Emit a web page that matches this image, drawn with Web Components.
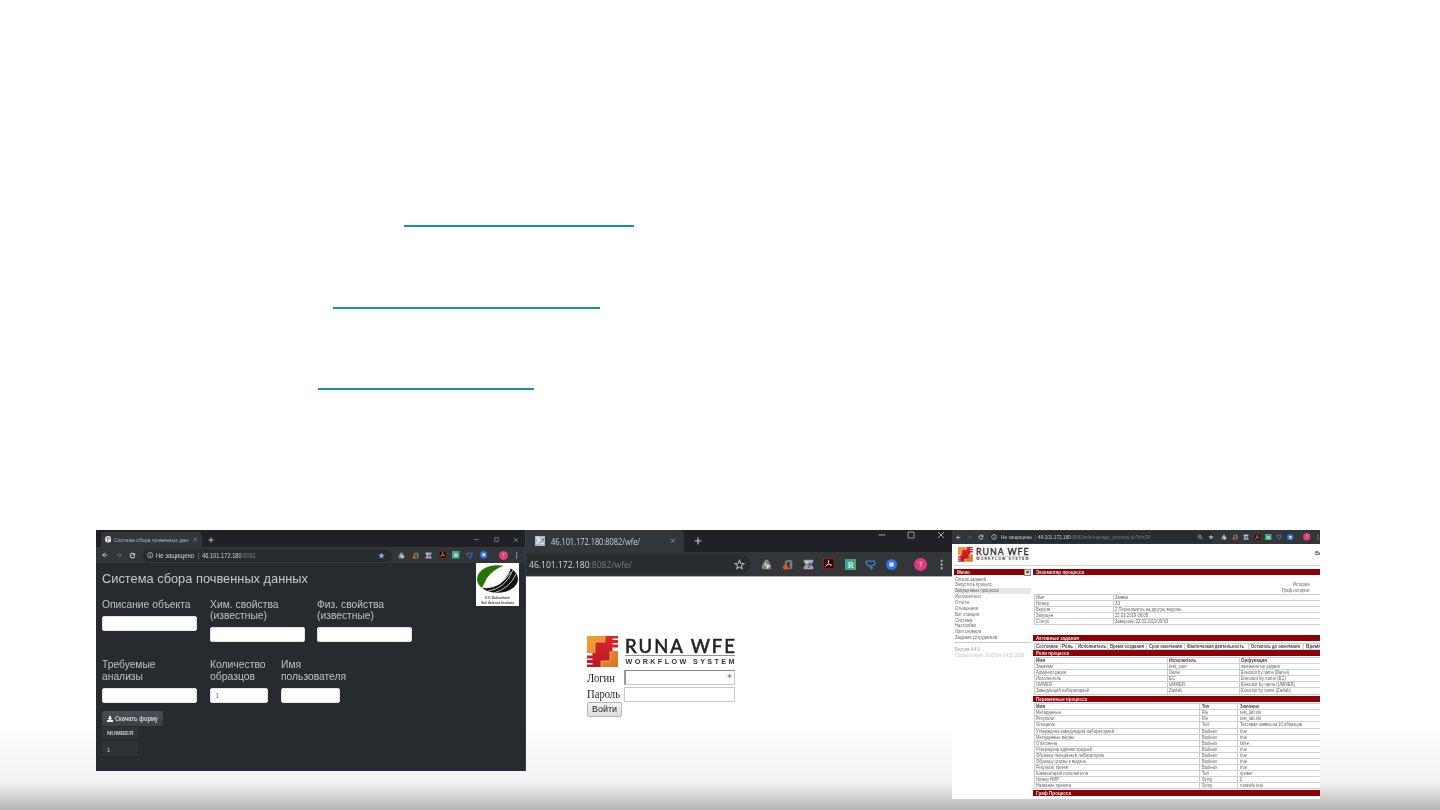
<!DOCTYPE html>
<html lang="ru"><head><meta charset="utf-8"><title>Система сбора почвенных данных</title>
<style>html,body{margin:0;padding:0;width:1440px;height:810px;overflow:hidden;background:#fff;font-family:"Liberation Sans",Arial,sans-serif}</style></head>
<body><demo-slide></demo-slide>
<script>
const define=(name,html,after)=>customElements.define(name,class extends HTMLElement{
  connectedCallback(){
    if(this.shadowRoot)return;
    const t=document.createElement('template');
    t.innerHTML=typeof html==='function'?html(this):html;
    this.attachShadow({mode:'open'}).append(t.content.cloneNode(true));
    if(after)after(this);
  }
});

/* One line of text, condensed or widened to the width in "w". */
define('fit-text',`<style>:host{display:block;flex:none;white-space:nowrap}span{display:inline-block;transform-origin:0 50%}</style><span><slot></slot></span>`,el=>{
  const w=+el.getAttribute('w');if(!w)return;
  el.style.width=w+'px';
  const s=el.shadowRoot.querySelector('span'),n=s.getBoundingClientRect().width;
  if(n)s.style.transform=`scaleX(${w/n})`;
});

define('link-rule',el=>`<style>:host{display:block;height:2px;background:#0b97a7;width:${el.getAttribute('w')}px;margin:${el.getAttribute('top')}px 0 0 ${el.getAttribute('x')}px}</style>`);

const glyphs={
 back:'<path d="M14 8H2M8 2L2 8l6 6" fill="none" stroke="#d5d7d9" stroke-width="2.3"/>',
 fwd:'<path d="M2 8h12M8 2l6 6-6 6" fill="none" stroke="#777b7e" stroke-width="1.9"/>',
 reload:'<path d="M12.5 5A5.4 5.4 0 1 0 13.3 10" fill="none" stroke="#d5d7d9" stroke-width="2.3"/><path d="M14 2v6H8z" fill="#d5d7d9"/>',
 info:'<circle cx="8" cy="8" r="6.5" fill="none" stroke="#b9bbbd" stroke-width="2"/><path d="M8 7v5M8 4v2" stroke="#b9bbbd" stroke-width="2"/>',
 starfull:'<path d="M8 1l2.1 4.8 5.1.5-3.9 3.4 1.2 5.1L8 12.1l-4.5 2.7 1.2-5.1L.8 6.3l5.1-.5z" fill="#80aaf5"/>',
 stargrey:'<path d="M8 1l2.1 4.8 5.1.5-3.9 3.4 1.2 5.1L8 12.1l-4.5 2.7 1.2-5.1L.8 6.3l5.1-.5z" fill="#a3a5a7"/>',
 star:'<path d="M8 2l1.8 4.2 4.5.4-3.4 3 1 4.4L8 11.7 4.1 14l1-4.4-3.4-3 4.5-.4z" fill="none" stroke="#b5b7b9" stroke-width="1.6"/>',
 find:'<circle cx="7" cy="7" r="4.5" fill="none" stroke="#aaa" stroke-width="1.8"/><path d="M10 10l5 4M5 7h4" stroke="#aaa" stroke-width="1.8"/>',
 drive:'<path d="M6 1h4l5 9-1 5H2l-1-5z" fill="#858585"/><path d="M8 3l-3 6 3 2 1 4 4-6-4-1z" fill="#e8e8e8"/><path d="M8 4v7" stroke="#777"/>',
 office:'<path d="M4 3l7-2 4 1v12l-4 1-5-1 5-1V4L7 5v5H4z" fill="#77797a"/><circle cx="5" cy="12" r="3.8" fill="#e2511b"/>',
 color:'<path d="M1 1h14v3l-3 4 3 4v3H1v-3l3-4-3-4z" fill="#a6a6a6"/><path d="M4 4h8v2H4z" fill="#eee"/><path d="M5 6h3v3H5z" fill="#45bd52"/><path d="M8 5h4v5H8z" fill="#3b5bd8"/><path d="M7 9h3v4H7z" fill="#d84368"/>',
 pdf:'<path d="M.8.8h14.4v14.4H.8z" fill="#260707" stroke="#83231d" stroke-width="1.6"/><path d="M7.5 3c2 0-.5 6-4 9 1-3 6-4 9-2-3 1-6-4-5-7z" fill="none" stroke="#dfcaca" stroke-width="1.1"/>',
 r:'<path d="M0 0h16v16H0z" fill="#42a781"/><text x="4" y="12.5" font-size="12" font-weight="bold" font-family="Liberation Serif,serif" fill="#d5f5e8">R</text>',
 filter:'<path d="M2 3h12v5l-4 2v5l-3-5H5L2 7z" fill="none" stroke="#3c7fd2" stroke-width="2" stroke-linejoin="round"/>',
 dot:'<circle cx="8" cy="8" r="8" fill="#3072e8"/><path d="M5 5h6v6H5z" fill="#dce9ff"/>',
 avatar:'<circle cx="8" cy="8" r="8" fill="#df3d7b"/><text x="5.7" y="11" font-size="8" font-family="Liberation Sans,sans-serif" fill="#fbd8e6">T</text>',
 more:'<path d="M7 1h2.5v3H7zM7 6.5h2.5v3H7zM7 12h2.5v3H7z" fill="#c5c7c9"/>',
 globe:'<circle cx="8" cy="8" r="8" fill="#e7e8e9"/><path d="M3 4l4 2-1 4 3 3M8 2l3 4 3-1" fill="none" stroke="#4b4e52" stroke-width="2"/>',
 page:'<path d="M0 0h16v16H0z" fill="#a9bac6"/><path d="M2 13L9 6l5-3M2 3h6M3 6h5M9 12h5" stroke="#eef5f8" stroke-width="2"/><path d="M9 6l5-3v4z" fill="#50758d"/>',
 plus:'<path d="M8 1v14M1 8h14" stroke="#c2c4c6" stroke-width="2.4"/>',
 close:'<path d="M2 2l12 12M14 2L2 14" stroke="#a5a7a9" stroke-width="2"/>',
 min:'<path d="M1 8h14" stroke="#96989a" stroke-width="2.2"/>',
 max:'<path d="M2 2h12v12H2z" fill="none" stroke="#96989a" stroke-width="2"/>'
};
define('ui-icon',el=>`<style>:host{display:block;flex:none;width:${el.getAttribute('s')}px;height:${el.getAttribute('s')}px;margin-left:${el.getAttribute('g')||0}px}svg{display:block;width:100%;height:100%}</style><svg viewBox="0 0 16 16">${glyphs[el.getAttribute('n')]}</svg>`);
/* Icons whose centres are given relative to the left of the row. */
const icons=(start,list)=>{let p=start;return list.map(([n,c,s])=>{const g=c-s/2-p;p=c+s/2;return `<ui-icon n="${n}" s="${s}" g="${g}"></ui-icon>`}).join('')};

define('form-field',el=>`<style>:host{display:block}label{display:block;font-size:10.6px;line-height:11.5px;color:#bfc1c3}.i{width:${el.getAttribute('w')}px;height:15px;box-sizing:border-box;background:#fff;border:1px solid #e1e2e3;border-radius:2px;margin-top:5.5px;padding-left:5px;font-size:6.5px;line-height:14px;color:#777}</style><label><slot></slot></label><div class="i">${el.getAttribute('value')||''}</div>`);

define('institute-logo',`<style>:host{display:block;width:43px;height:43px;background:#fff}svg{display:block}</style>
<svg width="43" height="43" viewBox="0 0 43 43"><clipPath id="e"><ellipse cx="21.5" cy="16" rx="20.5" ry="13.8"/></clipPath>
<g clip-path="url(#e)"><path d="M0 0h35Q18 5 11 15 8 21 6 25L0 28z" fill="#247407"/><path d="M7 25Q22 25 28 17 33 11 35 5L43 8V32H8z" fill="#111"/><path d="M12 28Q29 26 37 7M18 30Q34 25 40 11M9 25Q24 25 35 9" fill="none" stroke="#eee" stroke-width=".8"/></g>
<text x="9" y="35.8" textLength="25" lengthAdjust="spacingAndGlyphs" font-size="3.8" font-weight="bold" font-style="italic" fill="#444">V.V. Dokuchaev</text><text x="5" y="40.6" textLength="33" lengthAdjust="spacingAndGlyphs" font-size="3.8" font-weight="bold" fill="#444">Soil Science Institute</text></svg>`);

define('soil-window',`<style>
:host{display:block;width:430px;height:241px;box-sizing:border-box;background:#272b30;border-right:1px solid #24445f;overflow:hidden;flex:none}
.tabs{height:17px;background:#202124;display:flex;align-items:center;box-sizing:border-box;padding-top:2px}
.tab{margin-left:5px;width:101px;height:15px;background:#323639;border-radius:4px 4px 0 0;display:flex;align-items:center;box-sizing:border-box}
.tab fit-text{font-size:5.8px;line-height:10px;color:#b5b7b9;margin-left:3px}
.bar{height:16px;background:#323639;display:flex;align-items:center}
.omni{margin-left:6px;width:250px;height:13px;border-radius:7px;background:#282c2f;display:flex;align-items:center;font-size:6.5px;color:#d0d2d4}
.body{height:208px;display:flex;justify-content:space-between;padding:0 6px 0 6px;color:#c8c8c8;filter:blur(.3px)}
.title{font-size:13.3px;line-height:16px;margin-top:8px}
.row{display:grid;grid-template-columns:107.5px 107.5px 100px;margin-top:11.5px}
.r2{grid-template-columns:107.5px 71.5px 110px;margin-top:17px}
.btn{width:61px;height:15px;margin-top:8.5px;background:linear-gradient(#484e54,#3a3f44);border-radius:2px;display:flex;align-items:center;font-size:6.3px;font-weight:bold;color:#d0d0d0}
.btn svg{margin:0 2px 0 5px}.cell{width:31px;height:12px;padding-left:5px;background:#2f3338;font:bold 6px/13px "Liberation Sans",sans-serif;margin-top:.5px}
.gap{width:36px;height:3px;background:#2d3136;margin:2px 0 0}.one{font-weight:normal;margin-top:.5px}
</style>
<div class="tabs"><div class="tab">${icons(0,[['globe',7,6.5]])}<fit-text w="74">Система сбора почвенных дан</fit-text>${icons(87.25,[['close',94,4.5]])}</div>${icons(106,[['plus',115,6],['min',380.5,5],['max',400,5],['close',419.5,5.5]])}</div>
<div class="bar">${icons(0,[['back',9,6],['fwd',23,6],['reload',36.5,7]])}<div class="omni">${icons(0,[['info',8,6.5]])}<fit-text w="38" style="margin-left:3px">Не защищено</fit-text><span style="margin:0 3px 0 3.5px;color:#777">|</span><fit-text w="54">46.101.172.180<span style="color:#777b7e">:8081</span></fit-text>${icons(117,[['starfull',242,7]])}</div>${icons(296,[['drive',305.5,7],['office',319,7],['color',332.5,7],['pdf',346.5,7.5],['r',360,7.5],['filter',373.5,7],['dot',387.5,7.5]])}${icons(391,[['avatar',407,9],['more',420.5,7]])}</div>
<div class="body"><div><fit-text class="title" w="206">Система сбора почвенных данных</fit-text>
<div class="row"><form-field w="95"><fit-text w="88.5">Описание объекта</fit-text></form-field><form-field w="95"><fit-text w="68.5">Хим. свойства</fit-text><fit-text w="57">(известные)</fit-text></form-field><form-field w="95"><fit-text w="67">Физ. свойства</fit-text><fit-text w="57">(известные)</fit-text></form-field></div>
<div class="row r2"><form-field w="95"><fit-text w="53.5">Требуемые</fit-text><fit-text w="41">анализы</fit-text></form-field><form-field w="58.5" value="1"><fit-text w="55.5">Количество</fit-text><fit-text w="45">образцов</fit-text></form-field><form-field w="58.5"><fit-text w="20">Имя</fit-text><fit-text w="65">пользователя</fit-text></form-field></div>
<div class="btn"><svg width="6" height="6" viewBox="0 0 12 12"><path d="M4 0h4v4h3L6 9 1 4h3zM0 8h12v4H0z" fill="#eee"/></svg><fit-text w="43">Скачать форму</fit-text></div><div class="cell"><fit-text w="26.5">NUMBER</fit-text></div><div class="gap"></div><div class="cell one">1</div>
</div><institute-logo></institute-logo></div>`);

define('runa-logo',`<style>:host{display:block}svg{display:block;width:100%}</style><svg viewBox="0 0 149 31"><defs><linearGradient id="a" x2="1" y2="1"><stop stop-color="#f0a132"/><stop offset="1" stop-color="#dc721f"/></linearGradient><linearGradient id="b" x2="0" y2="1"><stop stop-color="#df2428"/><stop offset="1" stop-color="#b81924"/></linearGradient></defs>
<path d="M0 0h18v7H8v10H0zM14 31V25h9V15h8v16z" fill="url(#a)"/>
<path d="M18 0h13v2.5h-5.500v1.500H31v3h-5.500v1.500H31v3h-5.500V15H23v10H14v6H0v-2.500h5.500V27H0v-3h5.500v-1.500H0v-3h5.500V17H8V6h10z" fill="url(#b)"/><path d="M18 0v6H8v11M14 31v-6h9V15" fill="none" stroke="#f8c79b" stroke-width=".7"/>
<text x="38" y="16.500" textLength="110" lengthAdjust="spacing" font-family="Lato,sans-serif" font-size="18.500" font-weight="400" stroke="#242424" stroke-width=".6" fill="#242424">RUNA WFE</text><path d="M38 19.500h110" stroke="#888" stroke-width=".9"/><text x="38.500" y="27.800" textLength="109" lengthAdjust="spacing" font-family="Liberation Sans,sans-serif" font-size="7.200" font-weight="bold" fill="#333">WORKFLOW SYSTEM</text></svg>`);

define('login-window',`<style>:host{display:block;width:426px;height:241px;flex:none}
.tabs{height:22px;background:#202124;display:flex;align-items:center}.tab{width:158px;height:22px;background:#323639;border-radius:0 5px 0 0;display:flex;align-items:center;color:#d0d2d4;font:8.3px "Open Sans",sans-serif}
.ctl{height:14px;align-self:flex-start;display:flex;align-items:center;margin-top:-2px}
.bar{height:24px;background:#323639;display:flex;align-items:center;border-bottom:1px solid #a8a8a8}.omni{width:225px;height:20px;background:#292d30;border-radius:0 10px 10px 0;display:flex;align-items:center;font:9.3px "Open Sans",sans-serif;color:#d5d7d9}
.login{margin:59px 0 0 60.5px;width:149px;filter:blur(.3px)}.f{display:grid;grid-template-columns:37.5px 111px;align-items:center;font:12px/14px "Liberation Serif",serif;color:#222}
.in{height:15px;box-sizing:border-box;border:1px solid #c8c8c8;text-align:right;padding-right:2px;color:#c33;background:#fff;font-size:10px;line-height:13px}.first{border-top-color:#888;border-left:2px solid #999}
.b{margin-top:.5px;width:35px;height:15px;box-sizing:border-box;border:1px solid #b5b5b5;background:linear-gradient(#f3f3f3,#ddd);border-radius:2px;padding-left:4px;font-size:9px;line-height:13px;color:#222}</style>
<div class="tabs"><div class="tab">${icons(0,[['page',14,10]])}<fit-text w="89" style="margin-left:5.500px">46.101.172.180:8082/wfe/</fit-text>${icons(113.5,[['close',147,5.5]])}</div>${icons(158,[['plus',172,8]])}<div class="ctl">${icons(176,[['min',355.5,8],['max',384.5,8],['close',414.5,8]])}</div></div>
<div class="bar"><div class="omni"><fit-text w="103" style="margin-left:2.500px">46.101.172.180<span style="color:#777b7e">:8082/wfe/</span></fit-text>${icons(105.5,[['star',213.5,11]])}</div>${icons(225,[['drive',240,11],['office',261,11],['color',282,11],['pdf',302.5,11.5],['r',324,11],['filter',344.5,11],['dot',365.5,11],['avatar',394.5,13],['more',415.5,11]])}</div>
<div class="login"><runa-logo></runa-logo><div class="f" style="margin-top:3px"><fit-text w="28">Логин</fit-text><div class="in first">*</div></div><div class="f" style="margin-top:1.500px"><fit-text w="33">Пароль</fit-text><div class="in">&nbsp;</div></div><div class="b"><fit-text w="25">Войти</fit-text></div></div>`);

define('red-bar',el=>`<style>:host{display:block;height:6px;background:#8c0008;color:#f2dede;font-size:5.7px;font-weight:bold;line-height:6px;padding-left:3px;box-sizing:border-box}</style><fit-text w="${el.getAttribute('w')}"><slot></slot></fit-text>`);
define('data-grid',el=>{const cols=el.getAttribute('cols'),rh=el.getAttribute('rh'),head=el.hasAttribute('head');
 return `<style>:host{display:block;margin-left:.5px;border-top:1px solid #ccc;border-left:1px solid #ccc;overflow:hidden}.r{display:grid;grid-template-columns:${cols};height:${rh}px;box-sizing:border-box;border-bottom:.7px solid #d0d0d0;font-size:5.1px;line-height:5.5px;color:#646464}.r>div{padding-left:1.5px;border-right:1px solid #ccc;overflow:hidden}.r>div:last-child{border-right:0}.h{color:#444;${head?'font-weight:bold':''}}</style>`+el.getAttribute('rows').split(';').map((r,i)=>`<div class="r ${i?'':head?'h':''}">`+r.split('|').map(c=>{const [t,w]=c.split('~');return `<div><fit-text w="${w||0}">${t}</fit-text></div>`}).join('')+'</div>').join('')});

const menu=[['Список заданий',31],['Запустить процесс',37],['Запущенные процессы',44],['Исполнители',26],['Отчёты',14.5],['Отношения',23],['Бот станции',24],['Система',17.5],['Настройки',21],['Логи сервера',26],['Задания сотрудников',42]];
define('process-window',`<style>:host{display:block;width:368px;height:268.5px;background:#fff;overflow:hidden;flex:none}
.bar{height:14px;background:#323639;display:flex;align-items:center}.omni{margin-left:5px;width:226px;height:12px;border-radius:6px;background:#282c2f;display:flex;align-items:center;font-size:5.6px;color:#c8c8c8}
.head{height:22px;margin-left:2px;border-bottom:1px solid #d5d5d5;display:flex;justify-content:space-between;box-sizing:border-box}.head runa-logo{width:71px;margin:3px 0 0 4px}.head span{font-size:5px;font-weight:bold;color:#555;margin-top:6px;width:5px}
.cols{display:grid;grid-template-columns:77px 287px;column-gap:2px;padding:3px 0 0 2px;filter:blur(.25px)}
.m{height:5.87px;padding-left:1px;font-size:5.3px;line-height:5.87px;color:#666}.sel{background:#e7e7e7}.t{display:grid;grid-template-columns:1fr 7px;background:#8c0008;height:6px}.x{background:#eee3ce;border:.5px solid #888;font-size:6px;font-weight:bold;line-height:5px;text-align:center;height:5px;color:#000}
.foot{border-top:1px solid #ccc;margin-top:1.5px;padding:2.5px 0 0 1px;font-size:5px;line-height:6.5px;color:#999}
.links{height:18.5px;padding-top:7px;padding-right:11px;box-sizing:border-box;display:flex;flex-direction:column;align-items:flex-end;font-size:5px;line-height:5.7px;color:#666}
</style>
<div class="bar">${icons(0,[['back',6,5],['fwd',17.5,4.5],['reload',29,6]])}<div class="omni">${icons(0,[['info',5,6]])}<fit-text w="31" style="margin-left:4px">Не защищено</fit-text><span style="margin:0 2.5px;color:#777">|</span><fit-text w="112">46.101.172.180<span style="color:#777b7e">:8082/wfe/manage_process.do?id=39</span></fit-text>${icons(161,[['find',211,6],['stargrey',222,6]])}</div>${icons(263,[['drive',273,6],['office',284,6],['color',295,6],['pdf',306,6.5],['r',317,6.5],['filter',328,6],['dot',339,6.5],['avatar',355.5,7.5],['more',366.5,6]])}</div>
<div class="head"><runa-logo></runa-logo><span>Вы</span></div>
<div class="cols"><nav><div class="t"><red-bar w="13">Меню</red-bar><div class="x">×</div></div><div style="height:1.5px"></div>${menu.map(([t,w],i)=>`<div class="m ${i==2?'sel':''}"><fit-text w="${w}">${t}</fit-text></div>`).join('')}<div class="foot"><fit-text w="25">Версия 4.4.0</fit-text><fit-text w="69" style="color:#c5c5c5">Сборка master, 01d0164, 24.05.2018</fit-text></div></nav>
<main><red-bar w="48">Экземпляр процесса</red-bar><div class="links"><fit-text w="16.5">История</fit-text><fit-text w="27">Граф истории</fit-text></div>
<data-grid cols="79px 1fr" rh="6.05" rows="Имя~8|Заявка~13;Номер~13|33~5;Версия~14|2 Переключить на другую версию~66;Запущен~17|22.03.2019 09:05~33;Статус~13|Завершён 22.03.2019 09:53~53"></data-grid>
<div style="height:10.2px"></div><red-bar w="43">Активные задания</red-bar><div style="height:2px"></div>
<data-grid head cols="26px 15.5px 32px 39px 38px 64px 55px 1fr" rh="6" rows="Состояние~22|Роль~11|Исполнитель~28|Время создания~34|Срок окончания~33|Фактическая деятельность~57|Осталось до окончания~49|Время~15"></data-grid>
<div style="height:.3px"></div><red-bar w="33">Роли процесса</red-bar><div style="height:1px"></div>
<data-grid head cols="133px 72px 1fr" rh="6.05" rows="Имя~9|Исполнитель~27|Орфункция~26;Заказчик~17|test_user~18|значение не задано~39;Администрация~30|Daniel~11|Executor by name (Daniel)~48;Исполнитель~25|EC~6|Executor by name (EC)~45;UMMER~16|UMMER~16|Executor by name (UMMER)~54;Заведующий лабораторией~53|Zavlab~13|Executor by name (Zavlab)~50"></data-grid>
<div style="height:1.7px"></div><red-bar w="51">Переменные процесса</red-bar><div style="height:1px"></div>
<data-grid head cols="165.5px 38px 1fr" rh="6.09" rows="Имя~9|Тип~7|Значение~19;Метаданные~25|File~6|test_lab.xls~21;Результат~19|File~6|test_lab.xls~21;Описание~19|Text~7|Тестовая заявка на 10 образцов~62;Утверждена заведующим лабораторией~78|Boolean~15|true~7;Метаданные верны~38|Boolean~15|true~7;Отклонена~21|Boolean~15|false~9;Утверждена администрацией~56|Boolean~15|true~7;Образцы переданы в лабораторию~68|Boolean~15|true~7;Образцы готовы к выдаче~50|Boolean~15|true~7;Результат принят~33|Boolean~15|true~7;Комментарий исполнителя~52|Text~7|привет~13;Номер НИР~23|String~10|1;Название проекта~35|String~10|runawfe test~23"></data-grid>
<div style="height:.8px"></div><red-bar w="35">Граф Процесса</red-bar></main></div>`);

define('demo-slide',`<style>:host{display:flex;flex-direction:column;width:1440px;height:810px;background:linear-gradient(#fff 0,#fff 725px,#f2f2f2 783px,#b5b5b5 810px)}.links{height:530px;flex:none;display:flow-root}.shots{display:flex;align-items:flex-start;padding-left:96px}</style>
<div class="links"><link-rule x="404" top="225" w="230"></link-rule><link-rule x="333" top="80" w="267"></link-rule><link-rule x="318" top="79" w="216"></link-rule></div><div class="shots"><soil-window></soil-window><login-window></login-window><process-window></process-window></div>`);
</script></body></html>
